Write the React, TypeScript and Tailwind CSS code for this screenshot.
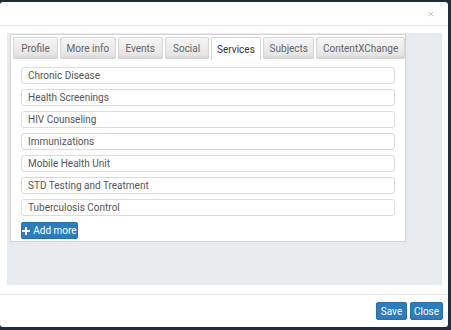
import { X } from "lucide-react";

const tabs = [
  { label: "Profile", w: "w-[45px]" },
  { label: "More info", w: "w-[56px]" },
  { label: "Events", w: "w-[45px]" },
  { label: "Social", w: "w-[44px]" },
  { label: "Services", w: "w-[51px]", active: true },
  { label: "Subjects", w: "w-[51px]" },
  { label: "ContentXChange", w: "w-[89px]" },
];

const services = [
  "Chronic Disease",
  "Health Screenings",
  "HIV Counseling",
  "Immunizations",
  "Mobile Health Unit",
  "STD Testing and Treatment",
  "Tuberculosis Control",
];

const App = () => {
  return (
    <div className="w-[451px] h-[330px] bg-[#1d2d3c] pt-[2px] pr-[3px] font-['Roboto',sans-serif] overflow-hidden">
      <div className="bg-white rounded-[3px] h-[325px] flex flex-col">
        {/* Header */}
        <div className="h-[24px] border-b border-[#e5e5e5] flex items-center justify-end pr-[13px] shrink-0">
          <X className="w-[8px] h-[8px] text-[#c2c2c2]" strokeWidth={3} />
        </div>

        {/* Body */}
        <div className="px-[7px] pt-[7px] shrink-0">
          <div className="w-[435px] h-[252px] bg-[#e8ebee] pl-[3px] pt-[1px]">
            <div className="w-[396px] bg-white border border-[#d4d4d4] pb-[2px]">
              <div className="flex gap-[2px] pl-[2px] pt-[2px] bg-white">
                {tabs.map((t) => (
                  <div
                    key={t.label}
                    className={
                      t.active
                        ? `${t.w} h-[23px] flex items-center justify-center bg-white border border-b-0 border-[#d4d4d4] rounded-t-[2px] text-[10px] text-[#333]`
                        : `${t.w} h-[22px] flex items-center justify-center bg-gradient-to-b from-[#f6f6f6] to-[#e2e2e2] border border-[#d6d6d6] rounded-t-[2px] text-[10px] text-[#666] shadow-[inset_0_-2px_2px_rgba(0,0,0,0.05)]`
                    }
                  >
                    {t.label}
                  </div>
                ))}
              </div>
              <div className="px-[10px] pt-[7px] flex flex-col gap-[5px]">
                {services.map((s) => (
                  <div
                    key={s}
                    className="h-[17px] border border-[#dcdcdc] rounded-[3px] flex items-center pl-[6px] text-[10px] text-[#555]"
                  >
                    {s}
                  </div>
                ))}
                <div className="mt-[1px]">
                  <button className="h-[17px] w-[57px] bg-[#2b7dbd] border border-[#2a6ea6] rounded-[2px] flex items-center justify-center gap-[3px] text-[10px] text-white">
                    <svg width="8" height="8" viewBox="0 0 8 8">
                      <path d="M3 0h2v3h3v2H5v3H3V5H0V3h3z" fill="white" />
                    </svg>
                    Add more
                  </button>
                </div>
              </div>
            </div>
          </div>
        </div>

        {/* Footer */}
        <div className="mt-[9px] border-t border-[#e5e5e5] flex justify-end gap-[3px] pt-[7px] pr-[5px]">
          <button className="h-[18px] w-[31px] bg-[#2b7dbd] border border-[#2a6ea6] rounded-[2px] text-[10px] text-white">
            Save
          </button>
          <button className="h-[18px] w-[33px] bg-[#2b7dbd] border border-[#2a6ea6] rounded-[2px] text-[10px] text-white">
            Close
          </button>
        </div>
      </div>
    </div>
  );
};

export default App;
